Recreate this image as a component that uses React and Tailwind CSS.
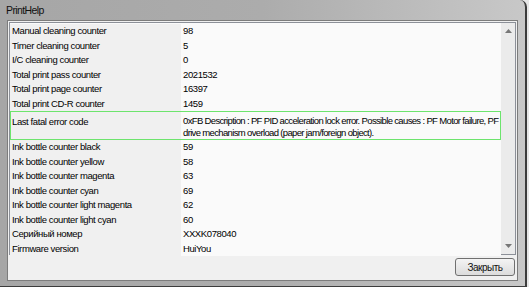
const rows = [
  ["Manual cleaning counter", "98"],
  ["Timer cleaning counter", "5"],
  ["I/C cleaning counter", "0"],
  ["Total print pass counter", "2021532"],
  ["Total print page counter", "16397"],
  ["Total print CD-R counter", "1459"],
  [
    "Last fatal error code",
    [
      "0xFB Description : PF PID acceleration lock error. Possible causes : PF Motor failure, PF",
      "drive mechanism overload (paper jam/foreign object).",
    ],
    true,
  ],
  ["Ink bottle counter black", "59"],
  ["Ink bottle counter yellow", "58"],
  ["Ink bottle counter magenta", "63"],
  ["Ink bottle counter cyan", "69"],
  ["Ink bottle counter light magenta", "62"],
  ["Ink bottle counter light cyan", "60"],
  ["Серийный номер", "XXXK078040"],
  ["Firmware version", "HuiYou"],
];

function Row({ label, value, selected }) {
  if (selected) {
    return (
      <div className="flex h-[31px] border border-[#6de46d]">
        <div className="w-[170px] shrink-0 bg-[#f0f0f0] pl-[1px] pt-[3px] tracking-[-0.4px]">{label}</div>
        <div className="flex-1 bg-[#fafafa] pl-[2px] pt-[3px] leading-[12px] whitespace-nowrap">
          {value.map((line) => (
            <div key={line}>{line}</div>
          ))}
        </div>
      </div>
    );
  }
  return (
    <div className="flex h-[14.5px]">
      <div className="w-[171px] shrink-0 bg-[#f0f0f0] pl-[2px] leading-[14.5px] tracking-[-0.4px]">{label}</div>
      <div className="flex-1 bg-[#fafafa] pl-[2px] leading-[14.5px] tracking-[-0.4px]">{value}</div>
    </div>
  );
}

export default function App() {
  return (
    <div className="h-[287px] w-[529px] overflow-hidden bg-[#e6e6e6] font-['Liberation_Sans',sans-serif] text-[9.5px] tracking-[-0.65px] text-[#000]">
      <div className="flex h-full w-[527px] flex-col rounded-tr-[7px] border-r-[2px] border-b border-[#3c3c3c] bg-gradient-to-r from-[#a6a6a6] via-[#acacac] to-[#c8c8c8]">
        <div className="flex h-[20px] shrink-0 items-center pl-[6px] pt-[1px] text-[10.5px] tracking-[-0.6px] text-[#111]">
          PrintHelp
        </div>
        <div className="mx-[7px] mb-[5px] flex flex-1 flex-col border border-[#7c7c7c] bg-[#f0f0f0]">
          <div className="mx-[1px] mt-[1px] flex h-[233px] border border-[#8c9098] bg-[#fafafa]">
            <div className="flex flex-1 flex-col pt-[1px]">
              {rows.map(([label, value, selected]) => (
                <Row key={label} label={label} value={value} selected={selected} />
              ))}
            </div>
            <div className="flex w-[14px] flex-col items-center justify-between bg-[#ebebeb] py-[6px]">
              <svg width="7" height="4" viewBox="0 0 7 4">
                <path d="M0 4 L3.5 0 L7 4 Z" fill="#777" />
              </svg>
              <svg width="7" height="4" viewBox="0 0 7 4">
                <path d="M0 0 L3.5 4 L7 0 Z" fill="#777" />
              </svg>
            </div>
          </div>
          <div className="flex flex-1 items-center justify-end pr-[2px] pb-[1px]">
            <button className="h-[18px] w-[60px] rounded-[3px] border border-[#707070] bg-gradient-to-b from-[#f4f4f4] to-[#dcdcdc] text-[10px] tracking-[-0.5px] text-[#111]">
              Закрыть
            </button>
          </div>
        </div>
      </div>
    </div>
  );
}
